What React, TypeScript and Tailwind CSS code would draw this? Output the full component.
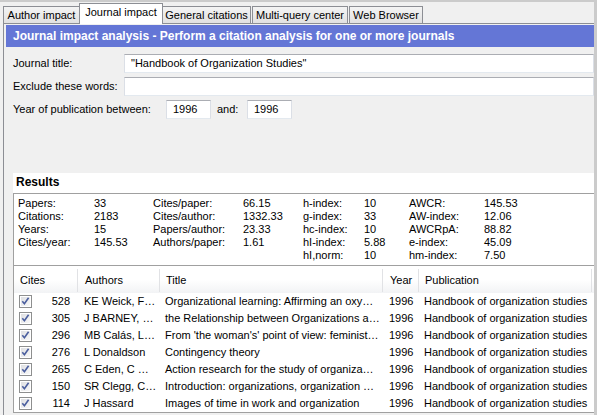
import React from "react";

const tabs = [
  { label: "Author impact", w: "w-[77px]", active: false, ml: "ml-0" },
  { label: "Journal impact", w: "w-[84px]", active: true, ml: "-ml-px" },
  { label: "General citations", w: "w-[89px]", active: false, ml: "-ml-px" },
  { label: "Multi-query center", w: "w-[96px]", active: false, ml: "ml-px" },
  { label: "Web Browser", w: "w-[74px]", active: false, ml: "ml-px" },
];

const stats: string[][] = [
  ["Papers:", "33", "Cites/paper:", "66.15", "h-index:", "10", "AWCR:", "145.53"],
  ["Citations:", "2183", "Cites/author:", "1332.33", "g-index:", "33", "AW-index:", "12.06"],
  ["Years:", "15", "Papers/author:", "23.33", "hc-index:", "10", "AWCRpA:", "88.82"],
  ["Cites/year:", "145.53", "Authors/paper:", "1.61", "hI-index:", "5.88", "e-index:", "45.09"],
  ["", "", "", "", "hI,norm:", "10", "hm-index:", "7.50"],
];

const rows = [
  ["528", "KE Weick, F…", "Organizational learning: Affirming an oxy…"],
  ["305", "J BARNEY, …", "the Relationship between Organizations a…"],
  ["296", "MB Calás, L…", "From 'the woman's' point of view: feminist…"],
  ["276", "L Donaldson", "Contingency theory"],
  ["265", "C Eden, C …", "Action research for the study of organiza…"],
  ["150", "SR Clegg, C…", "Introduction: organizations, organization …"],
  ["114", "J Hassard", "Images of time in work and organization"],
];

function Check() {
  return (
    <svg width="13" height="13" viewBox="0 0 13 13" className="block">
      <defs>
        <linearGradient id="cbg" x1="0" y1="0" x2="1" y2="1">
          <stop offset="0" stopColor="#dedfe2" />
          <stop offset="1" stopColor="#f8f8f8" />
        </linearGradient>
      </defs>
      <rect x="0.5" y="0.5" width="12" height="12" fill="#ffffff" stroke="#8e8f8f" />
      <rect x="2" y="2" width="9" height="9" fill="url(#cbg)" />
      <path d="M3.3 6.3 L5.4 8.8 L9.6 2.8" fill="none" stroke="#4a5e9e" strokeWidth="1.6" />
    </svg>
  );
}

function Input({ value, cls }: { value: string; cls: string }) {
  return (
    <div
      className={`${cls} h-[19px] bg-white border border-t-[#abadb3] border-l-[#dbdfe6] border-r-[#dbdfe6] border-b-[#e3e9ef] flex items-center pl-[6px] whitespace-nowrap overflow-hidden`}
    >
      {value}
    </div>
  );
}

export default function App() {
  return (
    <div className="w-[597px] h-[415px] overflow-hidden bg-[#f0f0f0] border-t-2 border-r-[3px] border-[#cbcbcb] font-['Liberation_Sans',Arial,sans-serif] text-[11px] leading-[13px] text-black">
      {/* tabs */}
      <div className="flex items-end h-[21px] pl-[3px]">
        {tabs.map((t) => (
          <div
            key={t.label}
            className={`${t.w} ${t.ml} flex items-center justify-center whitespace-nowrap border border-b-0 border-[#8c8e94] ${
              t.active
                ? "relative z-10 h-[21px] -mb-px bg-white pb-[3px]"
                : "h-[17px] bg-gradient-to-b from-[#f4f4f4] to-[#e1e1e1]"
            }`}
          >
            {t.label}
          </div>
        ))}
      </div>

      {/* panel */}
      <div className="ml-[3px] h-[392px] border-l border-t border-[#8c8e94] pt-px pl-[2px] flex flex-col">
        <div className="h-[22px] bg-[#6476d6] text-white font-bold text-[12px] flex items-center pl-[7px] whitespace-nowrap">
          Journal impact analysis - Perform a citation analysis for one or more journals
        </div>

        {/* form */}
        <div className="mt-[7px] flex flex-col gap-[4px]">
          <div className="flex items-center">
            <div className="w-[118px] pl-[7px] shrink-0 whitespace-nowrap">Journal title:</div>
            <Input value={'"Handbook of Organization Studies"'} cls="flex-1" />
          </div>
          <div className="flex items-center">
            <div className="w-[118px] pl-[7px] shrink-0 whitespace-nowrap">Exclude these words:</div>
            <Input value="" cls="flex-1" />
          </div>
          <div className="flex items-center">
            <div className="w-[160px] pl-[7px] shrink-0 whitespace-nowrap">Year of publication between:</div>
            <Input value="1996" cls="w-[45px]" />
            <div className="w-[36px] pl-[6px]">and:</div>
            <Input value="1996" cls="w-[45px]" />
          </div>
        </div>

        {/* results */}
        <div className="mt-[54px] ml-[7px] flex flex-col">
          <div className="h-[20px] bg-white pl-[3px] font-bold text-[12px] leading-[18px]">Results</div>
          <div className="h-[72px] bg-white border-t border-l border-[#a0a0a0] pt-[3px] pl-[4px] grid grid-cols-[76px_59px_90px_60px_61px_45px_75px_1fr] auto-rows-[13px] whitespace-nowrap">
            {stats.flat().map((s, i) => (
              <div key={i}>{s}</div>
            ))}
          </div>

          {/* table */}
          <div className="bg-white border-t border-l border-b border-[#a0a0a0] whitespace-nowrap">
            <div className="h-[27px] flex items-center bg-gradient-to-b from-white from-50% to-[#f2f3f5] pt-[2px]">
              <div className="w-[64px] h-[23px] flex items-center pl-[6px] border-r border-[#e1e2e5]">Cites</div>
              <div className="w-[82px] h-[23px] flex items-center pl-[7px] border-r border-[#e1e2e5]">Authors</div>
              <div className="w-[223px] h-[23px] flex items-center pl-[6px] border-r border-[#e1e2e5]">Title</div>
              <div className="w-[36px] h-[23px] flex items-center pl-[7px] border-r border-[#e1e2e5]">Year</div>
              <div className="w-[173px] h-[23px] flex items-center pl-[6px] border-r border-[#e1e2e5]">Publication</div>
            </div>
            {rows.map((r) => (
              <div key={r[0]} className="h-[17px] flex items-center">
                <div className="w-[64px] flex items-center pl-[5px] pr-[8px]">
                  <Check />
                  <span className="ml-auto">{r[0]}</span>
                </div>
                <div className="w-[82px] pl-[6px]">{r[1]}</div>
                <div className="w-[223px] pl-[5px]">{r[2]}</div>
                <div className="w-[36px] pl-[6px]">1996</div>
                <div className="w-[173px] pl-[5px]">Handbook of organization studies</div>
              </div>
            ))}
          </div>
        </div>
      </div>
    </div>
  );
}
